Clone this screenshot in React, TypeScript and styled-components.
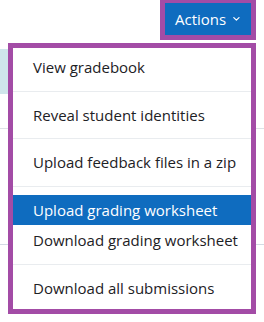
import React from 'react';
import styled, { createGlobalStyle } from 'styled-components';

const GlobalStyle = createGlobalStyle`
  html, body {
    margin: 0;
    padding: 0;
    background: #ffffff;
  }
  body {
    font-family: 'Open Sans', 'Noto Sans', 'Liberation Sans', sans-serif;
    color: #1d2125;
  }
`;

const items: { label: string; active?: boolean; divider?: boolean }[] = [
  { label: 'View gradebook', divider: true },
  { label: 'Reveal student identities', divider: true },
  { label: 'Upload feedback files in a zip', divider: true },
  { label: 'Upload grading worksheet', active: true },
  { label: 'Download grading worksheet', divider: true },
  { label: 'Download all submissions' },
];

const Chevron = () => (
  <svg width="10" height="6" viewBox="0 0 10 6" fill="none">
    <polyline
      points="1.2,1 5,4.6 8.8,1"
      stroke="#ffffff"
      strokeWidth="1.8"
      strokeLinecap="round"
      strokeLinejoin="round"
    />
  </svg>
);

const ActionMenu = () => {
  return (
    <Page>
      <GlobalStyle />
      <Header>
        <ButtonFrame>
          <ActionsButton>
            Actions
            <Chevron />
          </ActionsButton>
        </ButtonFrame>
      </Header>
      <Backdrop>
        <InfoBox />
        <TableLine $gap={34} />
        <TableLine $gap={115} $tint />
      </Backdrop>
      <MenuFrame>
        {items.map((item) => (
          <React.Fragment key={item.label}>
            <MenuItem $active={item.active}>{item.label}</MenuItem>
            {item.divider && <Divider />}
          </React.Fragment>
        ))}
      </MenuFrame>
    </Page>
  );
};

const Page = styled.div`
  position: relative;
  width: 264px;
  height: 322px;
  overflow: hidden;
  background: #ffffff;
`;

const Header = styled.div`
  display: flex;
  justify-content: flex-end;
  padding-right: 8px;
`;

const ButtonFrame = styled.div`
  border: 5px solid #a34ca6;
  margin-top: -2px;
  display: flex;
`;

const ActionsButton = styled.button`
  display: flex;
  align-items: center;
  gap: 7px;
  width: 86px;
  height: 32px;
  padding: 0 11px 0 10px;
  border: none;
  border-radius: 0;
  background: #0f6cbf;
  color: #ffffff;
  font-family: inherit;
  font-size: 15px;
  cursor: pointer;
`;

const Backdrop = styled.div`
  display: flex;
  flex-direction: column;
  padding-top: 9px;
`;

const InfoBox = styled.div`
  width: 240px;
  height: 45px;
  background: #cfe6eb;
`;

const TableLine = styled.div<{ $gap: number; $tint?: boolean }>`
  margin-top: ${(p) => p.$gap}px;
  height: 1px;
  background: ${(p) => (p.$tint ? '#d3dbe4' : '#dee2e6')};
`;

const MenuFrame = styled.div`
  position: absolute;
  left: 8px;
  top: 43px;
  width: 238px;
  border: 5px solid #a34ca6;
  background: #ffffff;
  padding: 4px 0 6px;
  display: flex;
  flex-direction: column;
`;

const MenuItem = styled.div<{ $active?: boolean }>`
  padding: 4px 20px;
  font-size: 15px;
  line-height: 22.5px;
  white-space: nowrap;
  color: ${(p) => (p.$active ? '#ffffff' : '#1d2125')};
  background: ${(p) => (p.$active ? '#0f6cbf' : 'transparent')};
  cursor: pointer;
`;

const Divider = styled.div`
  height: 1px;
  margin: 8px 0;
  background: #e9ecef;
`;

export default ActionMenu;
